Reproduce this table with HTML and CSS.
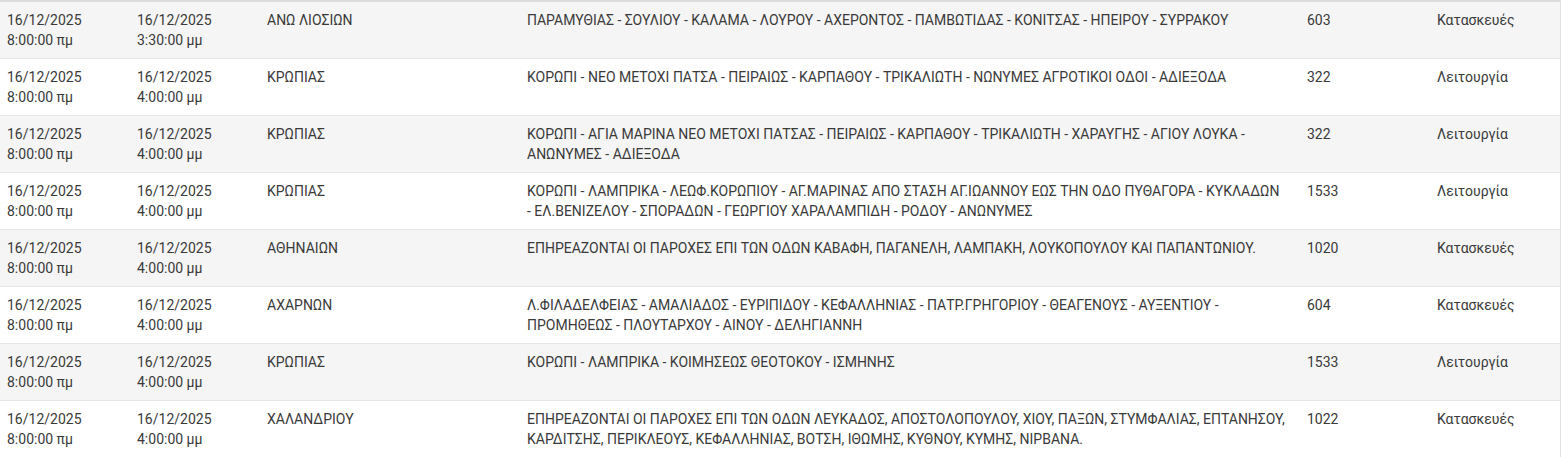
FILE: index.html
```html
<!DOCTYPE html>
<html lang="el">
<head>
<meta charset="utf-8">
<title>Διακοπές</title>
<link rel="stylesheet" href="styles.css">
</head>
<body>
<div class="wrap">
<table class="outages">
<colgroup>
<col class="c-date"><col class="c-date"><col class="c-area"><col class="c-streets"><col class="c-num"><col class="c-type">
</colgroup>
<tbody>
<tr>
<td>16/12/2025<br>8:00:00 πμ</td><td>16/12/2025<br>3:30:00 μμ</td><td>ΑΝΩ ΛΙΟΣΙΩΝ</td>
<td>ΠΑΡΑΜΥΘΙΑΣ - ΣΟΥΛΙΟΥ - ΚΑΛΑΜΑ - ΛΟΥΡΟΥ - ΑΧΕΡΟΝΤΟΣ - ΠΑΜΒΩΤΙΔΑΣ - ΚΟΝΙΤΣΑΣ - ΗΠΕΙΡΟΥ - ΣΥΡΡΑΚΟΥ</td><td>603</td><td>Κατασκευές</td>
</tr>
<tr>
<td>16/12/2025<br>8:00:00 πμ</td><td>16/12/2025<br>4:00:00 μμ</td><td>ΚΡΩΠΙΑΣ</td>
<td>ΚΟΡΩΠΙ - ΝΕΟ ΜΕΤΟΧΙ ΠΑΤΣΑ - ΠΕΙΡΑΙΩΣ - ΚΑΡΠΑΘΟΥ - ΤΡΙΚΑΛΙΩΤΗ - ΝΩΝΥΜΕΣ ΑΓΡΟΤΙΚΟΙ ΟΔΟΙ - ΑΔΙΕΞΟΔΑ</td><td>322</td><td>Λειτουργία</td>
</tr>
<tr>
<td>16/12/2025<br>8:00:00 πμ</td><td>16/12/2025<br>4:00:00 μμ</td><td>ΚΡΩΠΙΑΣ</td>
<td>ΚΟΡΩΠΙ - ΑΓΙΑ ΜΑΡΙΝΑ ΝΕΟ ΜΕΤΟΧΙ ΠΑΤΣΑΣ - ΠΕΙΡΑΙΩΣ - ΚΑΡΠΑΘΟΥ - ΤΡΙΚΑΛΙΩΤΗ - ΧΑΡΑΥΓΗΣ - ΑΓΙΟΥ ΛΟΥΚΑ - ΑΝΩΝΥΜΕΣ - ΑΔΙΕΞΟΔΑ</td><td>322</td><td>Λειτουργία</td>
</tr>
<tr>
<td>16/12/2025<br>8:00:00 πμ</td><td>16/12/2025<br>4:00:00 μμ</td><td>ΚΡΩΠΙΑΣ</td>
<td>ΚΟΡΩΠΙ - ΛΑΜΠΡΙΚΑ - ΛΕΩΦ.ΚΟΡΩΠΙΟΥ - ΑΓ.ΜΑΡΙΝΑΣ ΑΠΟ ΣΤΑΣΗ ΑΓ.ΙΩΑΝΝΟΥ ΕΩΣ ΤΗΝ ΟΔΟ ΠΥΘΑΓΟΡΑ - ΚΥΚΛΑΔΩΝ <span class="nowrap">- ΕΛ.ΒΕΝΙΖΕΛΟΥ</span> - ΣΠΟΡΑΔΩΝ - ΓΕΩΡΓΙΟΥ ΧΑΡΑΛΑΜΠΙΔΗ - ΡΟΔΟΥ - ΑΝΩΝΥΜΕΣ</td><td>1533</td><td>Λειτουργία</td>
</tr>
<tr>
<td>16/12/2025<br>8:00:00 πμ</td><td>16/12/2025<br>4:00:00 μμ</td><td>ΑΘΗΝΑΙΩΝ</td>
<td>ΕΠΗΡΕΑΖΟΝΤΑΙ ΟΙ ΠΑΡΟΧΕΣ ΕΠΙ ΤΩΝ ΟΔΩΝ ΚΑΒΑΦΗ, ΠΑΓΑΝΕΛΗ, ΛΑΜΠΑΚΗ, ΛΟΥΚΟΠΟΥΛΟΥ ΚΑΙ ΠΑΠΑΝΤΩΝΙΟΥ.</td><td>1020</td><td>Κατασκευές</td>
</tr>
<tr>
<td>16/12/2025<br>8:00:00 πμ</td><td>16/12/2025<br>4:00:00 μμ</td><td>ΑΧΑΡΝΩΝ</td>
<td>Λ.ΦΙΛΑΔΕΛΦΕΙΑΣ - ΑΜΑΛΙΑΔΟΣ - ΕΥΡΙΠΙΔΟΥ - ΚΕΦΑΛΛΗΝΙΑΣ - ΠΑΤΡ.ΓΡΗΓΟΡΙΟΥ - ΘΕΑΓΕΝΟΥΣ - ΑΥΞΕΝΤΙΟΥ - ΠΡΟΜΗΘΕΩΣ - ΠΛΟΥΤΑΡΧΟΥ - ΑΙΝΟΥ - ΔΕΛΗΓΙΑΝΝΗ</td><td>604</td><td>Κατασκευές</td>
</tr>
<tr>
<td>16/12/2025<br>8:00:00 πμ</td><td>16/12/2025<br>4:00:00 μμ</td><td>ΚΡΩΠΙΑΣ</td>
<td>ΚΟΡΩΠΙ - ΛΑΜΠΡΙΚΑ - ΚΟΙΜΗΣΕΩΣ ΘΕΟΤΟΚΟΥ - ΙΣΜΗΝΗΣ</td><td>1533</td><td>Λειτουργία</td>
</tr>
<tr>
<td>16/12/2025<br>8:00:00 πμ</td><td>16/12/2025<br>4:00:00 μμ</td><td>ΧΑΛΑΝΔΡΙΟΥ</td>
<td>ΕΠΗΡΕΑΖΟΝΤΑΙ ΟΙ ΠΑΡΟΧΕΣ ΕΠΙ ΤΩΝ ΟΔΩΝ ΛΕΥΚΑΔΟΣ, ΑΠΟΣΤΟΛΟΠΟΥΛΟΥ, ΧΙΟΥ, ΠΑΞΩΝ, ΣΤΥΜΦΑΛΙΑΣ, ΕΠΤΑΝΗΣΟΥ, ΚΑΡΔΙΤΣΗΣ, ΠΕΡΙΚΛΕΟΥΣ, ΚΕΦΑΛΛΗΝΙΑΣ, ΒΟΤΣΗ, ΙΘΩΜΗΣ, ΚΥΘΝΟΥ, ΚΥΜΗΣ, ΝΙΡΒΑΝΑ.</td><td>1022</td><td>Κατασκευές</td>
</tr>
</tbody>
</table>
</div>
</body>
</html>
```

FILE: styles.css
```css
html, body {
  margin: 0;
  padding: 0;
  background: #fff;
}

.wrap {
  width: 1560px;
  border-top: 2px solid #dcdcdc;
  border-right: 1px solid #e2e2e2;
}

.outages {
  width: 100%;
  table-layout: fixed;
  border-collapse: collapse;
  font-family: Roboto, "Noto Sans", sans-serif;
  font-size: 14px;
  line-height: 20px;
  color: #3a3a3a;
}

.c-date { width: 130px; }
.c-area { width: 260px; }
.c-streets { width: 780px; }
.c-num { width: 130px; }
.c-type { width: 130px; }

.outages td {
  vertical-align: top;
  padding: 8px 8px 8px 7px;
  height: 40px;
  border-top: 1px solid #e6e6e6;
}

.outages tr:first-child td {
  border-top: none;
}

.outages tr:nth-child(odd) td {
  background: #f5f5f5;
}

.nowrap {
  white-space: nowrap;
}
```
